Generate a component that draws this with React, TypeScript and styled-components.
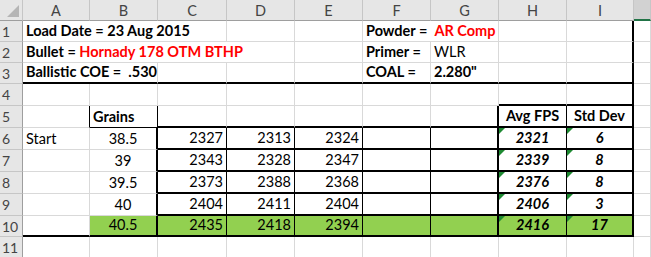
import React from "react";
import styled, { createGlobalStyle, css } from "styled-components";

const Global = createGlobalStyle`
  html, body { margin: 0; padding: 0; background: #fff; overflow: hidden; }
  body { font-family: "Lato", "Open Sans", sans-serif; }
`;

type Line = "grid" | "thin" | "thick";
type Align = "left" | "center" | "right";

const GRID = "#d9d9d9";
const HEAD_BG = "#e6e6e6";
const HEAD_LINE = "#c6c6c6";
const FILL = "#92d050";

const line = (l: Line) =>
  l === "thick" ? "2px solid #000" : l === "thin" ? "1px solid #000" : `1px solid ${GRID}`;

const Sheet = styled.div`
  display: grid;
  grid-template-columns: 23px 67px 68px 69px 68px 68px 68px 68px 68px 67px 1fr;
  grid-template-rows: 21px 21px 21px 21px 22px 22px 22px 22px 22px 22px 21px 21px;
  width: 651px;
  height: 257px;
  overflow: hidden;
  font-family: "Lato", "Open Sans", sans-serif;
  color: #000;
`;

const Corner = styled.div`
  position: relative;
  background: ${HEAD_BG};
  border-right: 1px solid ${HEAD_LINE};
  border-bottom: 1px solid #9e9e9e;
  box-sizing: border-box;
  &::after {
    content: "";
    position: absolute;
    right: 3px;
    bottom: 3px;
    width: 12px;
    height: 12px;
    background: #b5b5b5;
    clip-path: polygon(100% 0, 100% 100%, 0 100%);
  }
`;

const ColHead = styled.div<{ $active?: boolean }>`
  display: flex;
  align-items: center;
  justify-content: center;
  box-sizing: border-box;
  background: ${(p) => (p.$active ? "#d2d2d2" : HEAD_BG)};
  border-right: 1px solid ${HEAD_LINE};
  border-bottom: ${(p) => (p.$active ? "2px solid #217346" : "1px solid #9e9e9e")};
  font-size: 14.5px;
  color: #444;
  padding-top: 1px;
`;

const RowHead = styled.div`
  display: flex;
  align-items: center;
  justify-content: flex-start;
  box-sizing: border-box;
  background: ${HEAD_BG};
  border-right: 1px solid #9e9e9e;
  border-bottom: 1px solid ${HEAD_LINE};
  font-size: 14px;
  color: #444;
  padding-left: 2px;
  white-space: nowrap;
`;

const Cell = styled.div<{
  $span: number;
  $r: Line;
  $b: Line;
  $align: Align;
  $bold?: boolean;
  $italic?: boolean;
  $fill?: boolean;
}>`
  position: relative;
  grid-column: span ${(p) => p.$span};
  display: flex;
  align-items: flex-end;
  justify-content: ${(p) =>
    p.$align === "center" ? "center" : p.$align === "right" ? "flex-end" : "flex-start"};
  box-sizing: border-box;
  padding: 0 3px 1px 3px;
  border-right: ${(p) => line(p.$r)};
  border-bottom: ${(p) => line(p.$b)};
  background: ${(p) => (p.$fill ? FILL : "#fff")};
  font-size: 14.5px;
  line-height: 18px;
  white-space: pre;
  ${(p) =>
    p.$bold &&
    css`
      font-weight: 700;
    `}
  ${(p) =>
    p.$italic &&
    css`
      font-style: italic;
    `}
`;

/* Excel's "number stored as text" marker in the top-left corner */
const Flag = styled.span`
  position: absolute;
  left: 0;
  top: 0;
  width: 6px;
  height: 6px;
  background: #1e8a32;
  clip-path: polygon(0 0, 100% 0, 0 100%);
`;

const Red = styled.span`
  color: #ff0000;
`;

type Spec = {
  t?: React.ReactNode;
  span?: number;
  r?: Line;
  b?: Line;
  align?: Align;
  bold?: boolean;
  italic?: boolean;
  fill?: boolean;
  flag?: boolean;
};

const COLS = ["A", "B", "C", "D", "E", "F", "G", "H", "I", "J"];

const shots = [
  { grains: "38.5", v: ["2327", "2313", "2324"], avg: "2321", sd: "6", note: "Start" },
  { grains: "39", v: ["2343", "2328", "2347"], avg: "2339", sd: "8" },
  { grains: "39.5", v: ["2373", "2388", "2368"], avg: "2376", sd: "8" },
  { grains: "40", v: ["2404", "2411", "2404"], avg: "2406", sd: "3" },
  { grains: "40.5", v: ["2435", "2418", "2394"], avg: "2416", sd: "17", best: true },
];

const blank = (n: number, extra: Spec = {}): Spec[] => Array.from({ length: n }, () => ({ ...extra }));

const rows: Spec[][] = [
  [
    { t: "Load Date = 23 Aug 2015", span: 3, bold: true },
    {},
    {},
    {
      t: (
        <>
          {"Powder =  "}
          <Red>AR Comp</Red>
        </>
      ),
      span: 2,
      bold: true,
    },
    {},
    { r: "thick" },
    {},
  ],
  [
    {
      t: (
        <>
          {"Bullet = "}
          <Red>Hornady 178 OTM BTHP</Red>
        </>
      ),
      span: 4,
      bold: true,
    },
    {},
    { t: "Primer =", bold: true },
    { t: "WLR" },
    {},
    { r: "thick" },
    {},
  ],
  [
    { t: "Ballistic COE =  .530", span: 2, bold: true, b: "thick" },
    ...blank(3, { b: "thick" }),
    { t: "COAL =", bold: true, b: "thick" },
    { t: '2.280"', bold: true, b: "thick" },
    { b: "thick" },
    { b: "thick", r: "thick" },
    {},
  ],
  [...blank(7), { b: "thick" }, { b: "thick", r: "thick" }, {}],
  [
    { r: "thin" },
    { t: "Grains", bold: true, r: "thin", b: "thin" },
    ...blank(4, { b: "thick" }),
    { b: "thick", r: "thick" },
    { t: "Avg FPS", bold: true, align: "center", r: "thin", b: "thick" },
    { t: "Std Dev", bold: true, align: "center", r: "thick", b: "thick" },
    {},
  ],
  ...shots.map((s): Spec[] => {
    const edge: Line = s.best ? "thick" : "grid";
    return [
      { t: s.note, b: edge },
      { t: s.grains, align: "center", r: "thick", b: edge, fill: s.best },
      ...s.v.map((v): Spec => ({ t: v, align: "right", r: "thin", b: "thick", fill: s.best })),
      { r: "thin", b: "thick", fill: s.best },
      { r: "thick", b: "thick", fill: s.best },
      { t: s.avg, bold: true, italic: true, align: "center", r: "thin", b: "thick", fill: s.best, flag: true },
      { t: s.sd, bold: true, italic: true, align: "center", r: "thick", b: "thick", fill: s.best, flag: true },
      {},
    ];
  }),
  blank(10),
];

export default function App() {
  return (
    <>
      <Global />
      <Sheet>
        <Corner />
        {COLS.map((c) => (
          <ColHead key={c} $active={c === "J"}>
            {c === "J" ? "" : c}
          </ColHead>
        ))}
        {rows.map((cells, ri) => (
          <React.Fragment key={ri}>
            <RowHead>{ri + 1}</RowHead>
            {cells.map((s, ci) => (
              <Cell
                key={ci}
                $span={s.span ?? 1}
                $r={s.r ?? "grid"}
                $b={s.b ?? "grid"}
                $align={s.align ?? "left"}
                $bold={s.bold}
                $italic={s.italic}
                $fill={s.fill}
              >
                {s.flag && <Flag />}
                {s.t}
              </Cell>
            ))}
          </React.Fragment>
        ))}
      </Sheet>
    </>
  );
}
